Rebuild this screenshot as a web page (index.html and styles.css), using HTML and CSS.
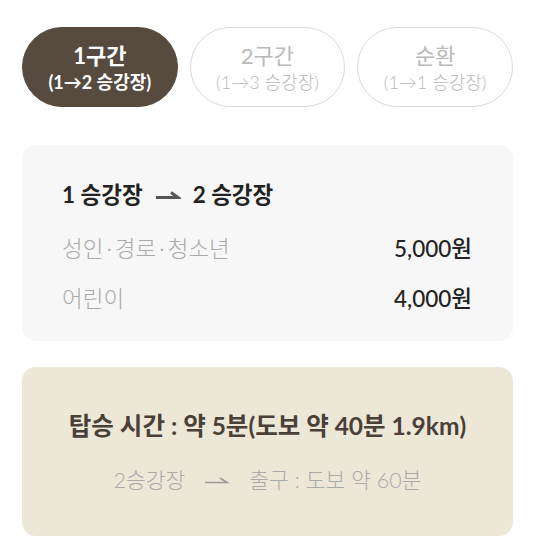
FILE: index.html
```html
<!DOCTYPE html>
<html lang="ko">
<head>
    <meta charset="UTF-8">
    <meta name="viewport" content="width=device-width, initial-scale=1.0">
    <title>구간 요금</title>
    <link rel="stylesheet" href="styles.css">
</head>
<body>
    <div class="wrap">
        <!-- 구간 선택 -->
        <div class="tabs">
            <button class="tab active">
                <span class="tab-title">1구간</span>
                <span class="tab-sub">(1→2 승강장)</span>
            </button>
            <button class="tab">
                <span class="tab-title">2구간</span>
                <span class="tab-sub">(1→3 승강장)</span>
            </button>
            <button class="tab">
                <span class="tab-title">순환</span>
                <span class="tab-sub">(1→1 승강장)</span>
            </button>
        </div>

        <!-- 요금 -->
        <div class="fare-card">
            <h3 class="route">
                <span>1 승강장</span>
                <svg class="arrow" width="26" height="12" viewBox="0 0 26 12"><path d="M1 8.5 H23 L16 3.5" fill="none" stroke="#555" stroke-width="3.2"/></svg>
                <span>2 승강장</span>
            </h3>
            <div class="fare-row">
                <span class="fare-label">성인<span class="dot">·</span>경로<span class="dot">·</span>청소년</span>
                <span class="fare-price">5,000원</span>
            </div>
            <div class="fare-row">
                <span class="fare-label">어린이</span>
                <span class="fare-price">4,000원</span>
            </div>
        </div>

        <!-- 탑승 시간 -->
        <div class="time-card">
            <p class="time-main">탑승 시간 : 약 5분(도보 약 40분 1.9km)</p>
            <p class="time-sub">
                <span>2승강장</span>
                <svg class="arrow" width="26" height="12" viewBox="0 0 26 12"><path d="M1 8.5 H23 L16 4" fill="none" stroke="#9a9a9a" stroke-width="1.6"/></svg>
                <span>출구 : 도보 약 60분</span>
            </p>
        </div>
    </div>
</body>
</html>
```

FILE: styles.css
```css
* {
    margin: 0;
    padding: 0;
    box-sizing: border-box;
    font-family: Lato, 'Noto Sans CJK KR', sans-serif;
}

body {
    background-color: #fff;
}

.wrap {
    padding: 27px 20px 0 22px;
}

.tabs {
    display: grid;
    grid-template-columns: repeat(3, 1fr);
    gap: 12px;
}

.tab {
    height: 80px;
    border: 1.5px solid #d9d9d9;
    border-radius: 40px;
    background-color: #fff;
    color: #b9b9b9;
    display: flex;
    flex-direction: column;
    align-items: center;
    justify-content: center;
    padding-top: 2px;
}

.tab.active {
    background-color: #574a3f;
    border-color: #574a3f;
    color: #fff;
}

.tab-title {
    font-size: 22px;
    line-height: 27px;
    font-weight: 400;
}

.tab-sub {
    font-size: 18px;
    line-height: 26px;
    font-weight: 300;
}

.tab.active .tab-title,
.tab.active .tab-sub {
    font-weight: 700;
}

.fare-card {
    margin-top: 38px;
    background-color: #f7f7f7;
    border-radius: 14px;
    padding: 36px 41px 28px 40px;
}

.route {
    display: flex;
    align-items: center;
    gap: 12px;
    font-size: 22.5px;
    line-height: 28px;
    font-weight: 700;
    color: #222;
    margin-bottom: 26px;
}

.fare-row {
    display: flex;
    justify-content: space-between;
    align-items: center;
    font-size: 22.5px;
    line-height: 28px;
    margin-bottom: 22px;
}

.fare-row:last-child {
    margin-bottom: 0;
}

.fare-label {
    color: #a9a9a9;
    font-weight: 300;
}

.fare-label .dot {
    margin: 0 3px;
}

.fare-price {
    color: #222;
    font-weight: 500;
}

.time-card {
    margin-top: 26px;
    background-color: #ede7d8;
    border-radius: 14px;
    padding: 45px 10px 42px;
    text-align: center;
}

.time-main {
    font-size: 24.5px;
    line-height: 28px;
    font-weight: 700;
    color: #4a4037;
}

.time-sub {
    margin-top: 26px;
    display: flex;
    justify-content: center;
    align-items: center;
    gap: 19px;
    font-size: 21.5px;
    line-height: 28px;
    font-weight: 300;
    color: #a9a9a9;
}
```
